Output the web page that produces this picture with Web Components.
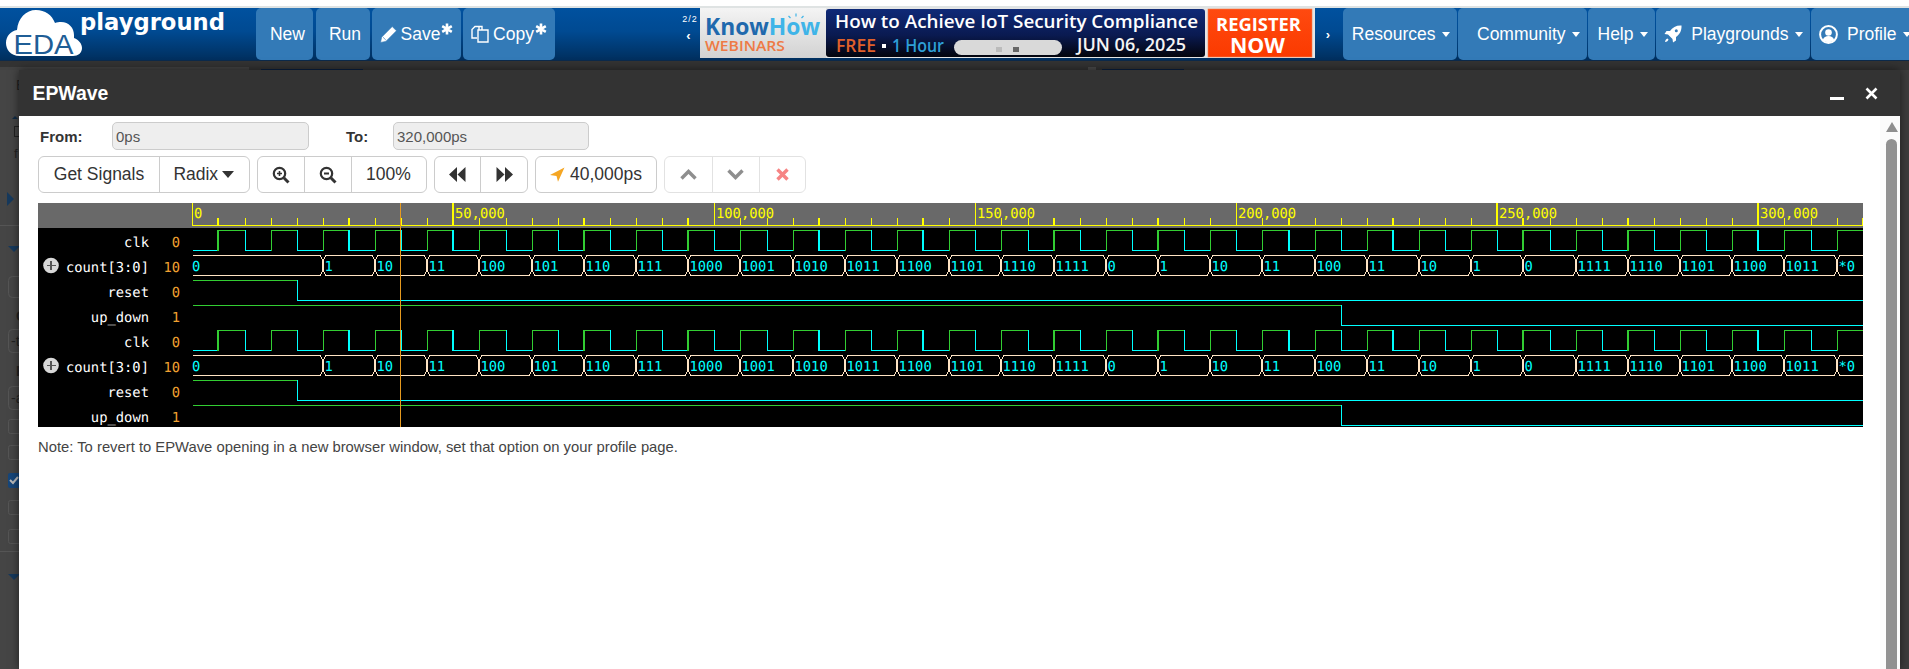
<!DOCTYPE html>
<html><head><meta charset="utf-8"><title>EPWave</title>
<style>html,body{margin:0;padding:0;overflow:hidden;background:#fff;font-family:"Liberation Sans",Arial,sans-serif}</style>
</head><body>
<eda-page>
  <eda-navbar slot="nav"></eda-navbar>
  <dim-underlay slot="under"></dim-underlay>
  <ep-modal slot="modal" heading="EPWave">
    <ep-fields>
      <ep-field label="From:" value="0ps" lw="72" iw="197"></ep-field>
      <ep-field label="To:" value="320,000ps" lw="47" iw="196" style="margin-left:37px"></ep-field>
    </ep-fields>
    <ep-tools>
      <tb-group>
        <tb-btn w="121">Get Signals</tb-btn>
        <tb-btn w="88.5" last>Radix <svg width="14" height="8" viewBox="0 0 14 8" style="margin-left:3px;vertical-align:2px"><path d="M1 0h12L7 7z" fill="#333"/></svg></tb-btn>
      </tb-group>
      <tb-group style="margin-left:7.5px">
        <tb-btn w="46.5"><svg width="18" height="18" viewBox="0 0 18 18"><circle cx="7.5" cy="7.5" r="5.7" fill="none" stroke="#333" stroke-width="2.2"/><path d="M11.8 11.8L16.5 16.5" stroke="#333" stroke-width="3"/><path d="M5 7.5h5M7.5 5v5" stroke="#333" stroke-width="1.6"/></svg></tb-btn>
        <tb-btn w="47"><svg width="18" height="18" viewBox="0 0 18 18"><circle cx="7.5" cy="7.5" r="5.7" fill="none" stroke="#333" stroke-width="2.2"/><path d="M11.8 11.8L16.5 16.5" stroke="#333" stroke-width="3"/><path d="M5 7.5h5" stroke="#333" stroke-width="1.8"/></svg></tb-btn>
        <tb-btn w="74" last>100%</tb-btn>
      </tb-group>
      <tb-group style="margin-left:7px">
        <tb-btn w="46.5"><svg width="17" height="15" viewBox="0 0 17 15"><path d="M8 0v15L0 7.500zM16.500 0v15L8.500 7.500z" fill="#333"/></svg></tb-btn>
        <tb-btn w="46" last><svg width="17" height="15" viewBox="0 0 17 15"><path d="M0.500 0v15L8.500 7.500zM9 0v15L17 7.500z" fill="#333"/></svg></tb-btn>
      </tb-group>
      <tb-group style="margin-left:7px">
        <tb-btn w="120" last><svg width="15" height="15" viewBox="0 0 15 15" style="margin-right:5px;vertical-align:-2px"><path d="M14.500 0.500L0 8l6.500 1L8 14.800z" fill="#f5a623"/></svg>40,000ps</tb-btn>
      </tb-group>
      <tb-group dim style="margin-left:7px">
        <tb-btn w="47.500"><svg width="17" height="11" viewBox="0 0 17 11"><path d="M1.500 9.500L8.500 2.500l7 7" fill="none" stroke="#333" stroke-width="3.400"/></svg></tb-btn>
        <tb-btn w="47.500"><svg width="17" height="11" viewBox="0 0 17 11"><path d="M1.500 1.500l7 7 7-7" fill="none" stroke="#333" stroke-width="3.400"/></svg></tb-btn>
        <tb-btn w="44.5" last><svg width="13" height="13" viewBox="0 0 13 13"><path d="M1.500 1.500l10 10M11.500 1.500l-10 10" fill="none" stroke="#f02020" stroke-width="3.400"/></svg></tb-btn>
      </tb-group>
    </ep-tools>
    <wave-view></wave-view>
    <ep-note>Note: To revert to EPWave opening in a new browser window, set that option on your profile page.</ep-note>
  </ep-modal>
</eda-page>
<script>
const def=(name,css,html,extra)=>{
  class C extends HTMLElement{
    constructor(){super();const r=this.attachShadow({mode:'open'});r.innerHTML='<style>'+css+'</style>'+(typeof html==='function'?html(this):html);}
    connectedCallback(){ if(extra) extra(this); }
  }
  customElements.define(name,C);
};

def('eda-page',`:host{display:block;position:relative;width:1909px;height:669px;overflow:hidden;background:#fff}
 .top{height:6px;background:#fff}.rule{height:2px;background:#dfe3e3}
 .modal{position:absolute;left:19px;top:70px;width:1881px;height:599px}
 .under{display:block}`,
 `<div class="top"></div><div class="rule"></div><slot name="nav"></slot><div class="under"><slot name="under"></slot></div><div class="modal"><slot name="modal"></slot></div>`);

def('nav-btn',`:host{display:flex;align-items:center;height:52px;box-sizing:border-box;background:#337ab7;border-radius:5px;color:#fff;font:17.5px "Liberation Sans",Arial,sans-serif;white-space:nowrap;flex:none;justify-content:center;width:var(--w);padding-left:var(--pl,0)}
 :host([end]){justify-content:flex-end;padding-right:7.5px}
 .c{display:none;width:0;height:0;border-left:4.5px solid transparent;border-right:4.5px solid transparent;border-top:5px solid #fff;margin-left:6px;margin-top:1px}
 :host([end]) .c{display:block}
 :host([clip]){justify-content:flex-start;padding-left:8px;padding-right:0;border-radius:5px 0 0 5px}
 :host([clip]) .c{display:block;flex:none}`,
 `<slot></slot><span class="c"></span>`);

const star=`<svg width="12" height="12" viewBox="0 0 12 12" style="margin:-10px 0 0 1px;flex:none"><path d="M6 0.500v11M1.200 3.200l9.600 5.600M10.800 3.200l-9.600 5.600" stroke="#fff" stroke-width="2.600"/></svg>`;

def('eda-navbar',`:host{display:flex;width:1909px;height:53px;box-sizing:border-box;border-bottom:1px solid #0c2a4b;background:linear-gradient(#00519f 0%,#004a92 45%,#002f5e 100%);overflow:hidden;align-items:flex-start}
 .logo{width:256px;height:52px;flex:none}
 .sp{width:125px;flex:none}
 .prev{width:20px;flex:none;height:52px;color:#fff;font:9px "Liberation Sans",sans-serif;text-align:center;letter-spacing:1px;padding-top:6px;box-sizing:border-box;line-height:11px}
 .prev b{display:block;font-size:13px;font-weight:bold;margin-top:5px;margin-right:3px;letter-spacing:0}
 .next{width:28px;flex:none;height:52px;color:#fff;display:flex;align-items:center;justify-content:center;font:bold 13px "Liberation Sans",sans-serif;padding-right:2px;box-sizing:border-box}
 svg.i{flex:none}`,
 `<div class="logo"><svg width="256" height="52" viewBox="0 8 256 52">
   <path d="M20 56C10 56 6 49 6 43c0-7 5-12 11-13 1-12 9-20 19-20 9 0 16 5 19 13 2-1 4-1 6-1 8 0 13 6 13 13v3c5 2 8 6 8 10 0 5-4 8-9 8z" fill="#fff"/>
   <text x="13.500" y="54" font-family="Liberation Sans" font-size="27.500" fill="#1f5e96" textLength="60" lengthAdjust="spacingAndGlyphs">EDA</text>
   <text x="80" y="30" font-family="DejaVu Sans" font-weight="bold" font-size="23" fill="#fff" textLength="145" lengthAdjust="spacingAndGlyphs">playground</text>
 </svg></div>
 <nav-btn style="--w:57px;--pl:6px;margin-right:3px">New</nav-btn>
 <nav-btn style="--w:54px;--pl:4px;margin-right:2px">Run</nav-btn>
 <nav-btn style="--w:89px;margin-right:2px"><svg class="i" width="17" height="17" viewBox="0 0 16 16" style="margin-right:4px"><path d="M0.500 15.500l1-5L11.500 0.500l4 4-10 10zM2.800 10.500l2.700 2.700" fill="#fff" stroke="#337ab7" stroke-width=".6"/></svg>Save${star}</nav-btn>
 <nav-btn style="--w:92px"><svg class="i" width="18" height="18" viewBox="0 0 18 18" style="margin-right:4px"><path d="M6 13H1V4.500L4 1.500h4v3M7 5h10v12H7z M11 5V1.500H8" fill="none" stroke="#fff" stroke-width="1.400"/></svg>Copy${star}</nav-btn>
 <div class="sp"></div>
 <div class="prev">2/2<b>‹</b></div>
 <ad-banner></ad-banner>
 <div class="next">›</div>
 <nav-btn end style="--w:114px;margin-right:1px">Resources</nav-btn>
 <nav-btn end style="--w:129px;margin-right:1px">Community</nav-btn>
 <nav-btn end style="--w:67px;margin-right:1px">Help</nav-btn>
 <nav-btn end style="--w:154px;margin-right:1px"><svg class="i" width="18" height="18" viewBox="0 0 18 18" style="margin-right:9px"><path d="M17.500 0.500c-5-.3-9 1.700-11.500 5.500H2.500L0.500 9l3.500 .5 4.500 4.500 .5 3.500 3-2V12c3.800-2.500 5.800-6.500 5.500-11.500z" fill="#fff"/><circle cx="12.300" cy="5.700" r="1.500" fill="#337ab7"/><path d="M1 17c.3-2 1-3 2.500-3.500l1 1C4 16 3 16.700 1 17z" fill="#fff"/></svg>Playgrounds</nav-btn>
 <nav-btn clip style="--w:98px;"><svg class="i" width="19" height="19" viewBox="0 0 19 19" style="margin-right:9px"><circle cx="9.500" cy="9.500" r="8.400" fill="none" stroke="#fff" stroke-width="2"/><circle cx="9.500" cy="7.500" r="3.300" fill="#fff"/><path d="M3.800 15c1-3 3-4 5.700-4s4.700 1 5.700 4c-3 3-8.400 3-11.400 0z" fill="#fff"/></svg>Profile</nav-btn>`);

def('ad-banner',`:host{display:block;width:615px;height:50px;flex:none;background:#e6e6e6}svg{display:block}`,
 `<svg width="615" height="50" viewBox="700 8 615 50">
  <defs><linearGradient id="lg" x1="0" x2="0" y1="0" y2="1"><stop offset="0" stop-color="#f4f4f4"/><stop offset="1" stop-color="#d2d2d2"/></linearGradient>
  <linearGradient id="nv" x1="0" x2="0" y1="0" y2="1"><stop offset="0" stop-color="#0f2a78"/><stop offset=".55" stop-color="#0a1a50"/><stop offset="1" stop-color="#03040c"/></linearGradient>
  <linearGradient id="or" x1="0" x2="0" y1="0" y2="1"><stop offset="0" stop-color="#ff4a10"/><stop offset="1" stop-color="#fb3a00"/></linearGradient></defs>
  <rect x="700" y="8" width="126" height="50" fill="url(#lg)"/>
  <text x="705" y="35" font-family="Open Sans" font-weight="700" font-size="24" textLength="115" lengthAdjust="spacingAndGlyphs"><tspan fill="#1f69ad">Know</tspan><tspan fill="#3fb4e8">How</tspan></text>
  <path d="M796 13.500v3M788.500 16l2 2M803.500 16l-2 2" stroke="#3fb4e8" stroke-width="1.200"/>
  <text x="705" y="51" font-family="Open Sans" font-weight="600" font-size="14.500" fill="#ee7a45" textLength="80" lengthAdjust="spacingAndGlyphs">WEBINARS</text>
  <rect x="826" y="9" width="379" height="48" rx="3" fill="url(#nv)"/>
  <text x="835" y="28" font-family="Open Sans" font-weight="600" font-size="18" fill="#fff" textLength="363" lengthAdjust="spacingAndGlyphs">How to Achieve IoT Security Compliance</text>
  <text x="836" y="52" font-family="Open Sans" font-weight="600" font-size="18" fill="#e0602a" textLength="40" lengthAdjust="spacingAndGlyphs">FREE</text>
  <rect x="882" y="44" width="4" height="4" fill="#fff"/>
  <text x="892" y="52" font-family="Open Sans" font-weight="600" font-size="18" fill="#2e9fd6" textLength="52" lengthAdjust="spacingAndGlyphs">1 Hour</text>
  <rect x="954" y="40" width="108" height="15" rx="7.500" fill="#d9d9d9"/>
  <rect x="996" y="47" width="6" height="5" fill="#bbb"/><rect x="1013" y="47" width="6" height="5" fill="#666"/>
  <text x="1077" y="51" font-family="Open Sans" font-weight="600" font-size="18" fill="#f4f4f4" textLength="109" lengthAdjust="spacingAndGlyphs">JUN 06, 2025</text>
  <rect x="1208" y="9" width="104" height="48" fill="url(#or)" stroke="#f08050" stroke-width=".6"/>
  <text x="1216" y="31" font-family="Open Sans" font-weight="700" font-size="18.500" fill="#fff" textLength="85" lengthAdjust="spacingAndGlyphs">REGISTER</text>
  <text x="1230" y="53" font-family="Open Sans" font-weight="700" font-size="22" fill="#fff" textLength="55" lengthAdjust="spacingAndGlyphs">NOW</text>
 </svg>`);

def('dim-underlay',`:host{display:block;width:1909px;height:609px;background:#3c3c3c}svg{display:block}`,
 `<svg width="1909" height="609" viewBox="0 61 1909 609">
  <rect x="0" y="61" width="1909" height="9" fill="#333"/>
  <rect x="0" y="67" width="249" height="3" fill="#424242"/><rect x="261" y="69" width="102" height="1" fill="#0a1f3f"/>
  <rect x="1088" y="67" width="8" height="3" fill="#4a4a4a"/><rect x="1102" y="69" width="82" height="1" fill="#0a1f3f"/>
  <rect x="0" y="70" width="19" height="599" fill="#454545"/>
  <path d="M15 116l3 3h-6z" fill="#102a44"/>
  <text x="16" y="90" font-family="Liberation Sans" font-size="14" fill="#222">E</text>
  <rect x="14.500" y="126.500" width="8" height="10" fill="none" stroke="#222"/>
  <text x="14" y="158" font-family="Liberation Sans" font-size="13" fill="#222">f</text>
  <path d="M7 192l7 7-7 7z" fill="#16395c"/>
  <rect x="0" y="225" width="19" height="1" fill="#555"/>
  <path d="M8 246h12l-6 6z" fill="#16395c"/>
  <rect x="8.500" y="276.500" width="20" height="21" rx="4" fill="none" stroke="#555"/>
  <text x="16" y="321" font-family="Liberation Sans" font-weight="bold" font-size="14" fill="#222">C</text>
  <rect x="8.500" y="329.500" width="20" height="23" rx="4" fill="none" stroke="#555"/>
  <text x="11" y="346" font-family="Liberation Sans" font-size="14" fill="#222">-t</text>
  <text x="16" y="376" font-family="Liberation Sans" font-weight="bold" font-size="14" fill="#222">E</text>
  <rect x="8.500" y="386.500" width="20" height="23" rx="4" fill="none" stroke="#555"/>
  <text x="11" y="403" font-family="Liberation Sans" font-size="14" fill="#222">-a</text>
  <rect x="8.500" y="419.500" width="14" height="14" rx="2" fill="none" stroke="#555"/>
  <rect x="8.500" y="445.500" width="14" height="14" rx="2" fill="none" stroke="#555"/>
  <rect x="8" y="473" width="15" height="15" rx="2" fill="#16467a"/><path d="M10 480l3 3 5-6" fill="none" stroke="#bbb" stroke-width="2"/>
  <rect x="8.500" y="500.500" width="14" height="14" rx="2" fill="none" stroke="#555"/>
  <rect x="8.500" y="529.500" width="14" height="14" rx="2" fill="none" stroke="#555"/>
  <rect x="0" y="551" width="19" height="1" fill="#555"/>
  <path d="M8 574h12l-6 6z" fill="#16395c"/>
 </svg>`);

def('ep-modal',`:host{display:flex;flex-direction:column;width:1881px;height:599px;box-shadow:0 0 9px rgba(0,0,0,.55)}
 header{height:46px;background:#333;color:#fff;flex:none;display:flex;align-items:center;box-sizing:border-box;padding:0 22px 0 13.500px}
 h1{font:bold 19.400px "Liberation Sans",Arial,sans-serif;margin:0;flex:1}
 .min{width:14px;height:3px;background:#fff;margin:11px 21px 0 0}
 .body{flex:1;display:flex;background:#fff;min-height:0}
 main{flex:1;padding:6px 0 0 19px;min-width:0;color:#333;font-family:"Liberation Sans",Arial,sans-serif}
 .sb{width:13px;flex:none;background:#fbfbfb;display:flex;flex-direction:column;align-items:center;padding:0 2px 0 5px}
 .sb i{display:block;width:0;height:0;border-left:6.500px solid transparent;border-right:6.500px solid transparent;border-bottom:10px solid #8f8f8f;margin-top:6px}
 .sb b{display:block;width:11px;flex:1;margin-top:7px;background:#919191;border-radius:5.500px 5.500px 0 0}`,
 h=>`<header><h1>${h.getAttribute('heading')}</h1><span class="min"></span><svg width="13" height="13" viewBox="0 0 13 13"><path d="M1.500 1.500l10 10M11.500 1.500l-10 10" stroke="#fff" stroke-width="2.600"/></svg></header>
 <div class="body"><main><slot></slot></main><div class="sb"><i></i><b></b></div></div>`);

def('ep-fields',`:host{display:flex;align-items:center;height:28px;padding-left:2px}`,`<slot></slot>`);
def('ep-field',`:host{display:flex;align-items:center;font:15px "Liberation Sans",Arial,sans-serif}
 label{font-weight:bold;color:#333;display:block}
 span{display:block;box-sizing:border-box;height:28px;line-height:28px;background:#eee;border:1px solid #ccc;border-radius:5px;color:#555;padding-left:3px}`,
 h=>`<label style="width:${h.getAttribute('lw')}px">${h.getAttribute('label')}</label><span style="width:${h.getAttribute('iw')}px">${h.getAttribute('value')}</span>`);
def('ep-tools',`:host{display:flex;margin-top:6px;height:37px}`,`<slot></slot>`);
def('tb-group',`:host{display:flex;box-sizing:border-box;height:37px;border:1px solid #ccc;border-radius:6px;overflow:hidden;flex:none;background:#fff}
 :host([dim]){opacity:.55}`,`<slot></slot>`);
def('tb-btn',`:host{display:flex;align-items:center;justify-content:center;box-sizing:border-box;height:35px;border-right:1px solid #ccc;font:17.500px "Liberation Sans",Arial,sans-serif;color:#333;white-space:nowrap;flex:none}
 :host([last]){border-right:0}`,h=>`<slot></slot>`,h=>{h.style.width=h.getAttribute('w')+'px'});
def('ep-note',`:host{display:block;margin-top:10px;font:14.8px/20px "Liberation Sans",Arial,sans-serif;color:#444}`,`<slot></slot>`);

/* waveform */
const wave=()=>{
  const X=n=>Math.round(192.3+26.1*n), R=1863, mono='font-family="DejaVu Sans Mono" font-size="13.800"';
  const thick=new Set();for(let k=0;k<15;k++)thick.add(Math.ceil(1+4.5*k));
  const G='#32cd32',C='#00ffff',B='#ffe4c4',Y='#ffff00';
  const ln=(x1,y1,x2,y2,c,w=1)=>{
    if(x1===x2){const o=w===2?0:.5;return `<path d="M${x1+o} ${y1}V${y2+1}" stroke="${c}" stroke-width="${w}"/>`;}
    return `<path d="M${x1} ${y1+.5}H${x2}" stroke="${c}"/>`;};
  let s=`<rect x="38" y="203" width="1825" height="25" fill="#696969"/><rect x="38" y="228" width="1825" height="199" fill="#000"/>`;
  s+=`<rect x="192" y="225" width="1671" height="1" fill="${Y}"/>`;
  for(let n=0;n<=64;n++){const x=X(n),w=thick.has(n)?2:1;
    if(n%10===0){const t=n*5000;const wm=(n===10||n===50||n===60)?2:1;s+=ln(x,203,x,225,Y,wm);
      s+=`<text x="${x+2}" y="218" ${mono} fill="${Y}">${t?t.toLocaleString('en-US'):'0'}</text>`;}
    else s+=ln(x,218,x,225,Y,w);
  }
  const vals='1 10 11 100 101 110 111 1000 1001 1010 1011 1100 1101 1110 1111 0 1 10 11 100 11 10 1 0 1111 1110 1101 1100 1011 *0'.split(' ');
  const plus=cy=>`<circle cx="51" cy="${cy}" r="7.800" fill="#d8d8d8"/><path d="M46.500 ${cy}h9M51 ${cy-4.500}v9" stroke="#555" stroke-width="1.300"/>`;
  const block=y=>{
    let o='';
    const rows=[['clk','0'],['count[3:0]','10'],['reset','0'],['up_down','1']];
    rows.forEach((r,i)=>{const by=y+17+25*i;
      o+=`<text x="149" y="${by}" ${mono} fill="#fff" text-anchor="end">${r[0]}</text><text x="180" y="${by}" ${mono} fill="#f0a030" text-anchor="end">${r[1]}</text>`;});
    o+=plus(y+35.500);
    const hi=y,lo=y+20;
    let px=193,level=0;
    for(let n=1;n<=64;n++){const x=Math.min(X(n),R),up=n%2===1;
      o+=ln(px,level?hi:lo,x,level?hi:lo,level?G:C);
      if(x<R)o+=ln(x,hi,x,lo,up?G:C,thick.has(n)?2:1);
      px=x;level=up?1:0;}
    const top=y+25,bot=y+45;
    const trans=[];vals.forEach((v,i)=>trans.push(5+2*i));
    let start=193;
    const labels=[['0',192]];
    trans.forEach((n,i)=>{const x=X(n);
      o+=ln(start,top,x-2,top,B)+ln(start,bot,x-2,bot,B);
      o+=`<path d="M${x-2.5} ${top+.5}L${x-1.5} ${top+3.5}L${x-.5} ${top+5}V${bot-4}L${x-1.5} ${bot-2.5}L${x-2.5} ${bot+.5}M${x+2.5} ${top+.5}L${x+1.5} ${top+3.5}L${x+.5} ${top+5}V${bot-4}L${x+1.5} ${bot-2.5}L${x+2.5} ${bot+.5}" fill="none" stroke="${B}"/>`;
      start=x+2;labels.push([vals[i],x+1.5]);});
    o+=ln(start,top,R,top,B)+ln(start,bot,R,bot,B);
    labels.forEach(l=>{o+=`<text x="${l[1]}" y="${y+41}" ${mono} fill="${C}">${l[0]}</text>`;});
    const rh=y+50,rl=y+70,x4=X(4);
    o+=ln(193,rh,x4,rh,G)+ln(x4,rh,x4,rl,C)+ln(x4,rl,R,rl,C);
    const uh=y+75,ul=y+95,x44=X(44);
    o+=ln(193,uh,x44,uh,G)+ln(x44,uh,x44,ul,C)+ln(x44,ul,R,ul,C);
    return o;
  };
  s+=block(230)+block(330);
  s+=`<path d="M400.500 203V427" stroke="#e69a1f"/>`;
  return `<svg width="1825" height="224" viewBox="38 203 1825 224" shape-rendering="crispEdges" text-rendering="geometricPrecision">${s}</svg>`;
};
def('wave-view',`:host{display:block;width:1825px;height:224px;margin-top:10px}svg{display:block}text{shape-rendering:auto}circle{shape-rendering:auto}`,wave());
</script>
</body></html>
